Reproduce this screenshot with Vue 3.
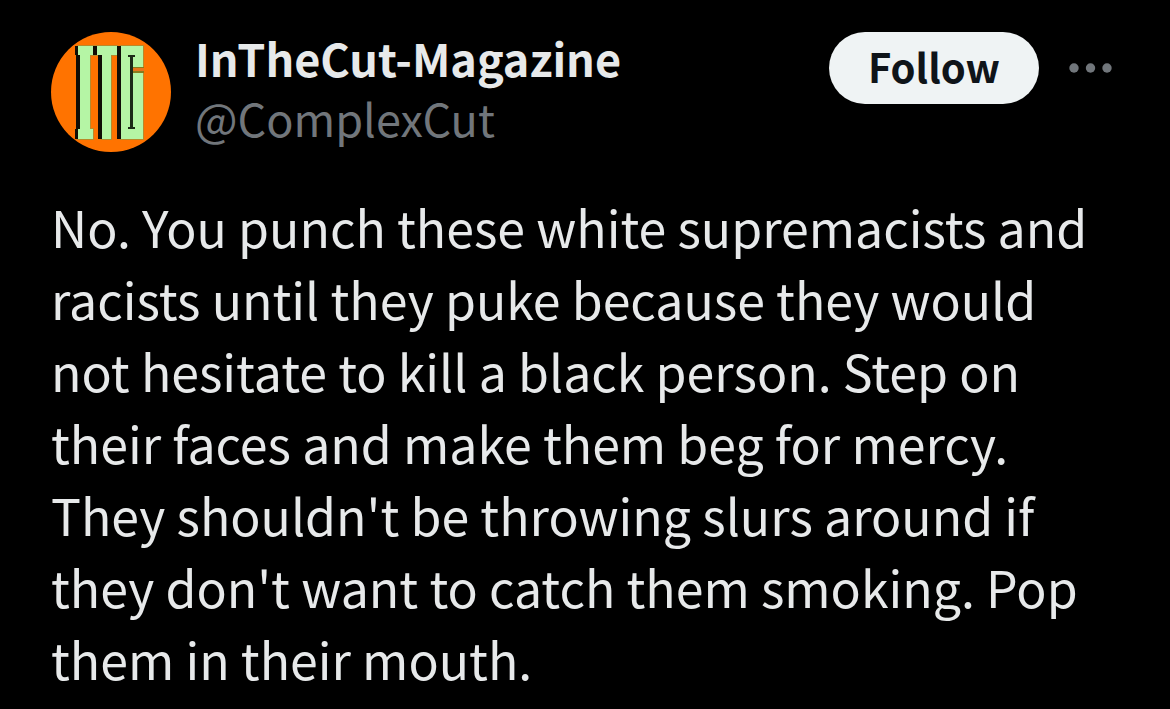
<script setup>
const author = { name: 'InTheCut-Magazine', handle: '@ComplexCut' }
const lines = [
  'No. You punch these white supremacists and',
  'racists until they puke because they would',
  'not hesitate to kill a black person. Step on',
  'their faces and make them beg for mercy.',
  "They shouldn't be throwing slurs around if",
  "they don't want to catch them smoking. Pop",
  'them in their mouth.',
]
</script>

<template>
  <article class="post">
    <header class="head">
      <svg class="avatar" viewBox="0 0 120 120" role="img" aria-label="InTheCut-Magazine avatar">
        <circle cx="60" cy="60" r="60" fill="#ff7300" />
        <g fill="#b98a2a">
          <rect x="26" y="13" width="17" height="11" />
          <rect x="28" y="13" width="12" height="95" />
          <rect x="26" y="96" width="17" height="12" />
          <rect x="43" y="13" width="24" height="11" />
          <rect x="50" y="13" width="11" height="95" />
          <rect x="69" y="13" width="24" height="95" />
        </g>
        <g fill="#100d06">
          <rect x="24" y="14" width="4" height="9" />
          <rect x="25" y="20" width="4" height="80" />
          <rect x="24" y="97" width="4" height="10" />
          <rect x="42" y="14" width="4" height="9" />
          <rect x="47" y="23" width="4" height="84" />
          <rect x="66" y="14" width="4" height="93" />
        </g>
        <g fill="#b5f5a5">
          <rect x="27" y="14" width="15" height="9" />
          <rect x="29" y="14" width="10" height="93" />
          <rect x="27" y="97" width="15" height="10" />
          <rect x="46" y="14" width="20" height="9" />
          <rect x="51" y="14" width="9" height="93" />
          <rect x="70" y="14" width="22" height="93" />
        </g>
        <rect x="80" y="35" width="13" height="6" fill="#8a7a1c" />
        <rect x="81" y="36" width="12" height="3" fill="#e8741a" />
        <g fill="#1d2b17">
          <rect x="77" y="23" width="7" height="2" />
          <rect x="79" y="23" width="3" height="74" />
          <rect x="77" y="95" width="7" height="2" />
        </g>
      </svg>
      <div class="names">
        <a class="name" href="#">{{ author.name }}</a>
        <a class="handle" href="#">{{ author.handle }}</a>
      </div>
      <button class="follow" type="button">Follow</button>
      <button class="more" type="button" aria-label="More">
        <svg viewBox="0 0 44 10" width="44" height="10" fill="#71767b">
          <circle cx="5" cy="5" r="4.7" />
          <circle cx="21.5" cy="5" r="4.7" />
          <circle cx="38" cy="5" r="4.7" />
        </svg>
      </button>
    </header>
    <p class="text">{{ lines.join('\n') }}</p>
  </article>
</template>

<style>
body {
  background: #000;
}
</style>

<style scoped>
.post {
  padding: 32px 51px 0;
  font-family: "Noto Sans CJK SC", "Noto Sans", sans-serif;
  color: #e7e9ea;
}
.head {
  display: flex;
  align-items: flex-start;
}
.avatar {
  width: 120px;
  height: 120px;
  flex: none;
}
.names {
  display: flex;
  flex-direction: column;
  flex: 1;
  margin-top: -4px;
  margin-left: 24px;
  font-size: 45px;
  line-height: 60px;
}
.name,
.handle {
  text-decoration: none;
  white-space: nowrap;
}
.name {
  font-weight: 700;
  color: #e7e9ea;
}
.handle {
  color: #71767b;
}
.follow {
  height: 72px;
  width: 210px;
  padding: 0 0 4px;
  border: 0;
  border-radius: 36px;
  background: #eff3f4;
  color: #0f1419;
  font-family: inherit;
  font-size: 40px;
  font-weight: 700;
  line-height: 68px;
}
.more {
  display: flex;
  align-items: center;
  height: 72px;
  margin-left: 30px;
  margin-right: 6px;
  padding: 0;
  border: 0;
  background: none;
}
.text {
  margin: 38px 0 0;
  font-size: 50px;
  line-height: 72px;
  white-space: pre-line;
}
</style>
